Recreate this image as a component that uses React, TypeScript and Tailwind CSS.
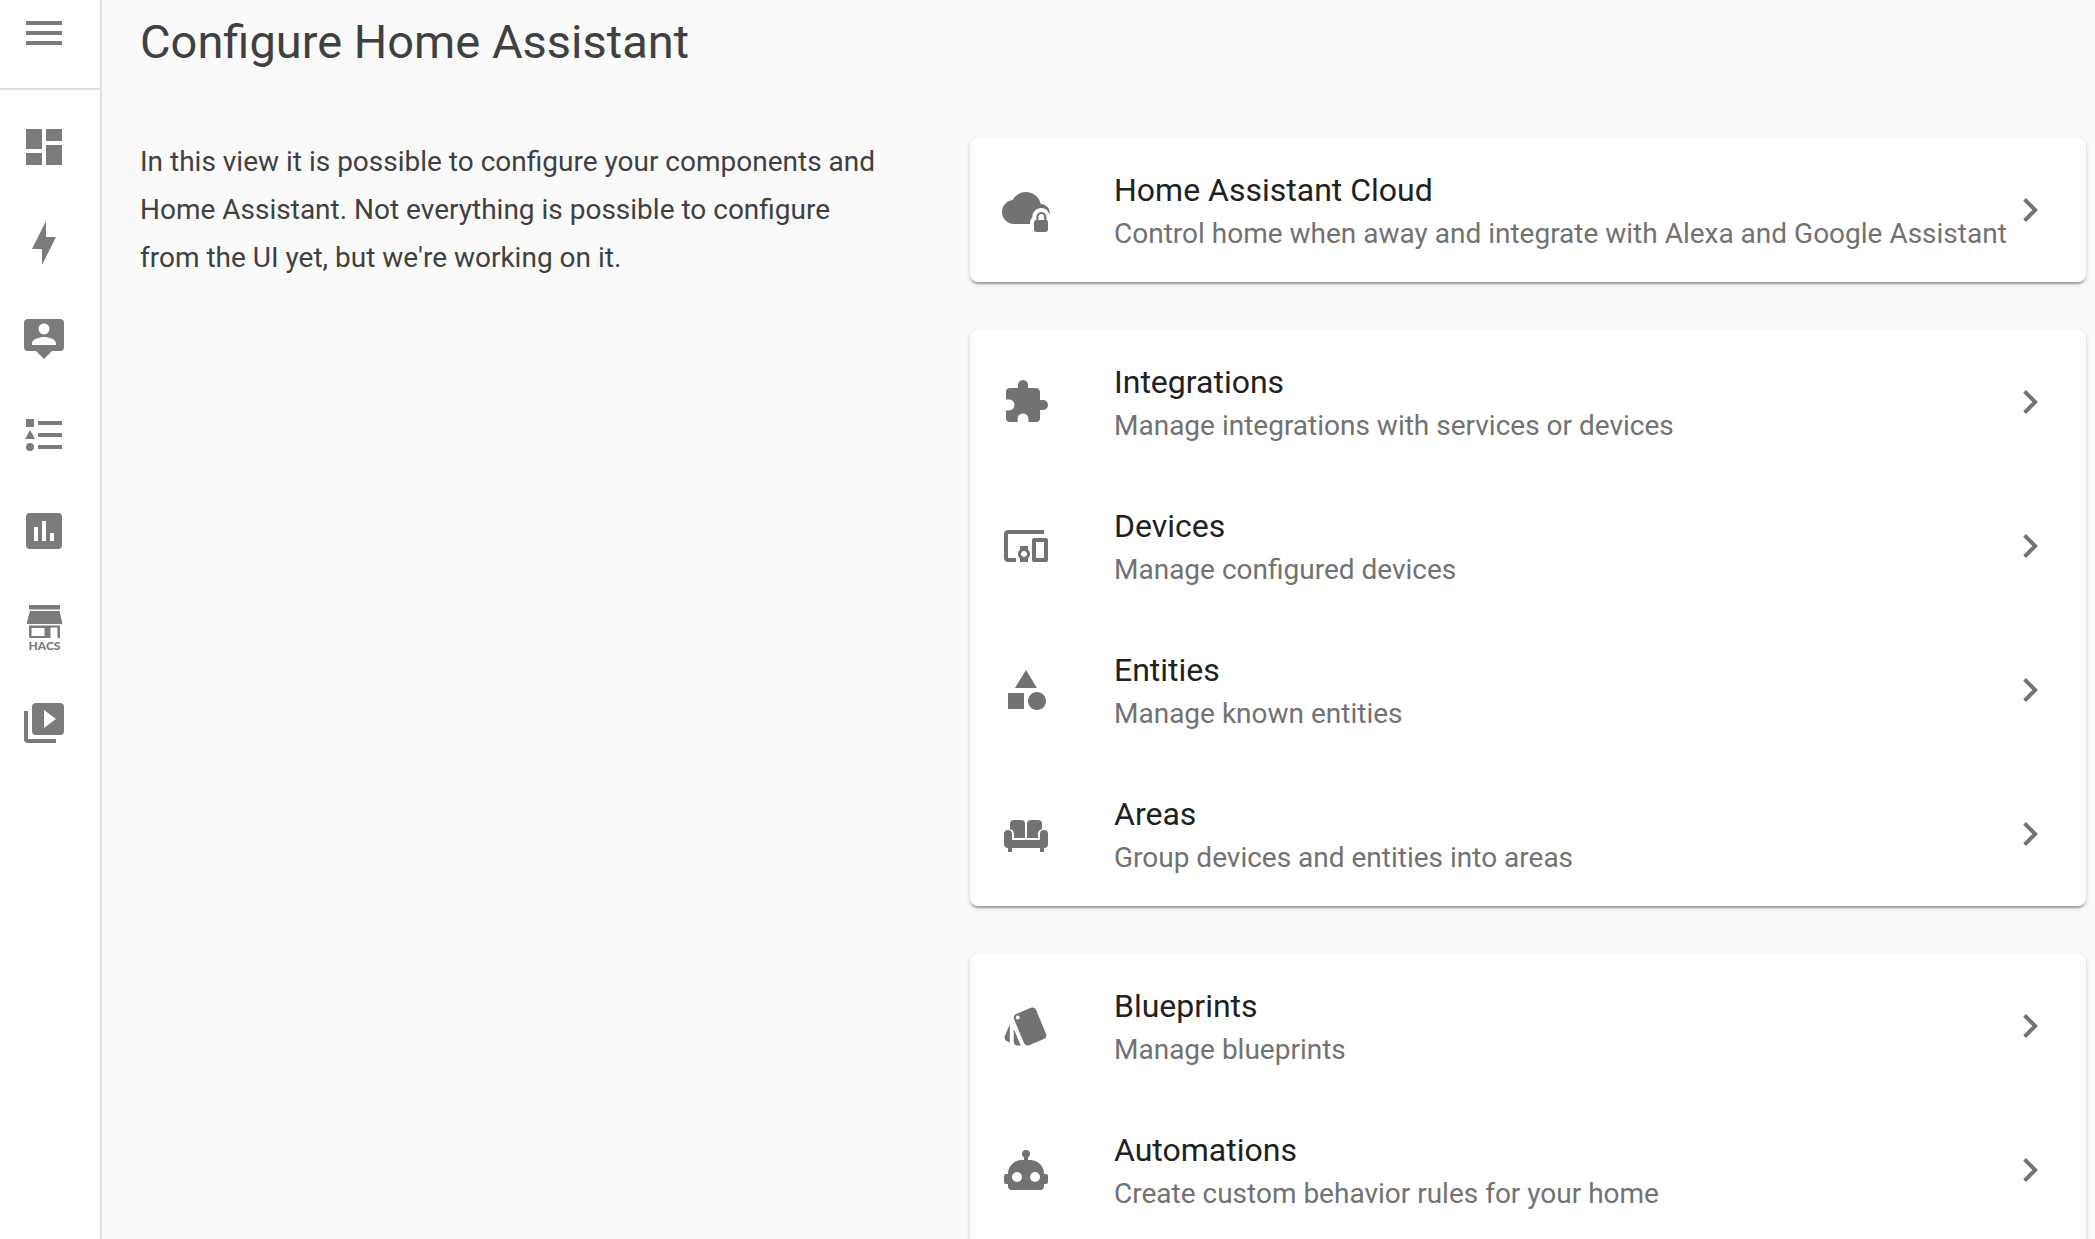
import React from "react";

const paths = {
  menu: "M3,6H21V8H3V6M3,11H21V13H3V11M3,16H21V18H3V16Z",
  dashboard: "M13,3V9H21V3M13,21H21V11H13M3,21H11V15H3M3,13H11V3H3V13Z",
  bolt: "M11 15H6L13 1V9H18L11 23V15Z",
  account:
    "M20,2H4A2,2 0 0,0 2,4V16A2,2 0 0,0 4,18H8L12,22L16,18H20A2,2 0 0,0 22,16V4A2,2 0 0,0 20,2M12,4.3C13.5,4.3 14.7,5.5 14.7,7C14.7,8.5 13.5,9.7 12,9.7C10.5,9.7 9.3,8.5 9.3,7C9.3,5.5 10.5,4.3 12,4.3M18,15H6V14.1C6,12.1 10,11 12,11C14,11 18,12.1 18,14.1V15Z",
  list: "M5,9.5L7.5,14H2.5L5,9.5M3,4H7V8H3V4M5,20A2,2 0 0,0 7,18A2,2 0 0,0 5,16A2,2 0 0,0 3,18A2,2 0 0,0 5,20M9,5V7H21V5H9M9,19H21V17H9V19M9,11V13H21V11H9Z",
  chart:
    "M9 17H7V10H9V17M13 17H11V7H13V17M17 17H15V13H17V17M19 3H5A2,2 0 0,0 3,5V19A2,2 0 0,0 5,21H19A2,2 0 0,0 21,19V5A2,2 0 0,0 19,3Z",
  media:
    "M4,6H2V20A2,2 0 0,0 4,22H18V20H4V6M20,2H8A2,2 0 0,0 6,4V16A2,2 0 0,0 8,18H20A2,2 0 0,0 22,16V4A2,2 0 0,0 20,2M12,14.5V5.5L18,10L12,14.5Z",
  cloud:
    "M12,3C9.11,3 6.6,4.64 5.35,7.04C2.34,7.36 0,9.91 0,13A6,6 0 0,0 6,19H14V18.2C14,17.2 14.5,16.2 15.2,15.7V15.5C15.2,13 17.2,11 19.6,11C21.6,11 23.2,12.3 23.8,14.3C24.4,11.6 22.2,9.2 19.35,9.04C18.67,5.59 15.64,3 12,3M22.2,17V15.5C22.2,14.1 21,13 19.7,13C18.3,13 17.2,14.1 17.2,15.5V17C16.5,17 16,17.5 16,18.2V21.8C16,22.5 16.5,23 17.2,23H21.8C22.5,23 23,22.5 23,21.8V18.2C23,17.5 22.6,17 22.2,17M21.1,17H18.2V15.5C18.2,14.6 18.9,14 19.7,14C20.5,14 21.1,14.6 21.1,15.5V17Z",
  puzzle:
    "M20.5,11H19V7C19,5.89 18.1,5 17,5H13V3.5A2.5,2.5 0 0,0 10.5,1A2.5,2.5 0 0,0 8,3.5V5H4A2,2 0 0,0 2,7V10.8H3.5C5,10.8 6.2,12 6.2,13.5C6.2,15 5,16.2 3.5,16.2H2V20A2,2 0 0,0 4,22H7.8V20.5C7.8,19 9,17.8 10.5,17.8C12,17.8 13.2,19 13.2,20.5V22H17A2,2 0 0,0 19,20V16H20.5A2.5,2.5 0 0,0 23,13.5A2.5,2.5 0 0,0 20.5,11Z",
  devices:
    "M3 6H21V4H3C1.9 4 1 4.9 1 6V18C1 19.1 1.9 20 3 20H7V18H3V6M13 12H9V13.78C8.39 14.33 8 15.11 8 16C8 16.89 8.39 17.67 9 18.22V20H13V18.22C13.61 17.67 14 16.88 14 16S13.61 14.33 13 13.78V12M11 17.5C10.17 17.5 9.5 16.83 9.5 16S10.17 14.5 11 14.5 12.5 15.17 12.5 16 11.83 17.5 11 17.5M22 8H16C15.5 8 15 8.5 15 9V19C15 19.5 15.5 20 16 20H22C22.5 20 23 19.5 23 19V9C23 8.5 22.5 8 22 8M21 18H17V10H21V18Z",
  shape:
    "M11,13.5V21.5H3V13.5H11M12,2L17.5,11H6.5L12,2M17.5,13C20,13 22,15 22,17.5C22,20 20,22 17.5,22C15,22 13,20 13,17.5C13,15 15,13 17.5,13Z",
  sofa: "M6,5H9.5A2,2 0 0,1 11.5,7V14H6V12A2.5,2.5 0 0,0 4,9.6V7A2,2 0 0,1 6,5M14.5,5H18A2,2 0 0,1 20,7V9.6A2.5,2.5 0 0,0 18,12V14H12.5V7A2,2 0 0,1 14.5,5M3,10A2,2 0 0,1 5,12V15H19V12A2,2 0 0,1 23,12V17A2,2 0 0,1 21,19V21H19V19H5V21H3V19A2,2 0 0,1 1,17V12A2,2 0 0,1 3,10Z",
  swatch:
    "M2.53,19.65L3.87,20.21V11.18L1.44,17.04C1.03,18.06 1.5,19.23 2.53,19.65M22.03,15.95L17.07,3.98C16.76,3.23 16.03,2.77 15.26,2.75C15,2.75 14.73,2.79 14.47,2.9L7.1,5.95C6.35,6.26 5.89,7 5.87,7.75C5.86,8 5.91,8.29 6,8.55L11,20.5C11.29,21.28 12.03,21.74 12.81,21.75C13.07,21.75 13.33,21.7 13.58,21.6L20.94,18.55C21.96,18.13 22.45,16.96 22.03,15.95M7.88,8.75A1,1 0 0,1 6.88,7.75A1,1 0 0,1 7.88,6.75C8.43,6.75 8.88,7.2 8.88,7.75C8.88,8.3 8.43,8.75 7.88,8.75M5.88,19.75A2,2 0 0,0 7.88,21.75H9.33L5.88,13.41V19.75Z",
  robot:
    "M12,2A2,2 0 0,1 14,4C14,4.74 13.6,5.39 13,5.73V7H14A7,7 0 0,1 21,14H22A1,1 0 0,1 23,15V18A1,1 0 0,1 22,19H21V20A2,2 0 0,1 19,22H5A2,2 0 0,1 3,20V19H2A1,1 0 0,1 1,18V15A1,1 0 0,1 2,14H3A7,7 0 0,1 10,7H11V5.73C10.4,5.39 10,4.74 10,4A2,2 0 0,1 12,2M7.5,13A2.5,2.5 0 0,0 5,15.5A2.5,2.5 0 0,0 7.5,18A2.5,2.5 0 0,0 10,15.5A2.5,2.5 0 0,0 7.5,13M16.5,13A2.5,2.5 0 0,0 14,15.5A2.5,2.5 0 0,0 16.5,18A2.5,2.5 0 0,0 19,15.5A2.5,2.5 0 0,0 16.5,13Z",
  next: "M8.59,16.58L13.17,12L8.59,7.41L10,6L16,12L10,18L8.59,16.58Z",
};

type IconName = keyof typeof paths;

function Icon({ name }: { name: IconName }) {
  return (
    <svg viewBox="0 0 24 24" className="size-12 shrink-0 fill-current" aria-hidden="true">
      <path fillRule="evenodd" d={paths[name]} />
    </svg>
  );
}

function HacsIcon() {
  return (
    <svg viewBox="0 0 48 48" className="size-12 shrink-0 overflow-visible fill-current" aria-hidden="true">
      <path
        fillRule="evenodd"
        d="M9,2H40V6.500H9ZM10,8H39.500L42,19V21H7V19ZM9,22.500H40V35H37.500V25.500Q37.500,24.500 36.500,24.500H31.500Q30.500,24.500 30.500,25.500V35H10L9,34ZM11.500,25V33H24.500V25Z"
      />
      <text x="24.500" y="47" textAnchor="middle" className="font-['Lato'] text-[12px] font-black">
        HACS
      </text>
    </svg>
  );
}

const nav: { label: string; icon: IconName | "hacs" }[] = [
  { label: "Overview", icon: "dashboard" },
  { label: "Energy", icon: "bolt" },
  { label: "Map", icon: "account" },
  { label: "Logbook", icon: "list" },
  { label: "History", icon: "chart" },
  { label: "HACS", icon: "hacs" },
  { label: "Media Browser", icon: "media" },
];

type Item = { icon: IconName; title: string; text: string };

const groups: Item[][] = [
  [
    {
      icon: "cloud",
      title: "Home Assistant Cloud",
      text: "Control home when away and integrate with Alexa and Google Assistant",
    },
  ],
  [
    { icon: "puzzle", title: "Integrations", text: "Manage integrations with services or devices" },
    { icon: "devices", title: "Devices", text: "Manage configured devices" },
    { icon: "shape", title: "Entities", text: "Manage known entities" },
    { icon: "sofa", title: "Areas", text: "Group devices and entities into areas" },
  ],
  [
    { icon: "swatch", title: "Blueprints", text: "Manage blueprints" },
    { icon: "robot", title: "Automations", text: "Create custom behavior rules for your home" },
  ],
];

function Row({ icon, title, text }: Item) {
  return (
    <a href="#" className="flex h-36 items-center px-8 text-[#727272]">
      <Icon name={icon} />
      <span className="ml-16 min-w-0 flex-1 pt-1">
        <span className="block text-[32px] leading-[44px] text-[#212121]">{title}</span>
        <span className="block text-[28px] leading-[44px] whitespace-nowrap">{text}</span>
      </span>
      <Icon name="next" />
    </a>
  );
}

export default function App() {
  return (
    <div className="flex h-screen overflow-hidden bg-[#fafafa] font-['Roboto',sans-serif]">
      <aside className="flex w-[102px] shrink-0 flex-col border-r-2 border-[#e0e0e0] bg-white text-[#7b7b7b]">
        <div className="flex h-[90px] shrink-0 border-b-2 border-[#e0e0e0] px-5 pt-[9px]">
          <button type="button" aria-label="Toggle sidebar" className="h-12">
            <Icon name="menu" />
          </button>
        </div>
        <nav className="flex flex-col gap-12 px-5 pt-[33px]">
          {nav.map(({ label, icon }) => (
            <a key={label} href="#" aria-label={label}>
              {icon === "hacs" ? <HacsIcon /> : <Icon name={icon} />}
            </a>
          ))}
        </nav>
      </aside>
      <main className="min-w-0 flex-1 pr-[9px] pl-[38px]">
        <h1 className="pt-2 text-[47px] leading-[68px] text-[#404040]">Configure Home Assistant</h1>
        <div className="mt-[62px] grid grid-cols-[2fr_3fr] gap-[86px]">
          <p className="text-[28px] leading-[48px] text-[#404040]">
            In this view it is possible to configure your components and Home Assistant. Not
            everything is possible to configure from the UI yet, but we're working on it.
          </p>
          <div className="flex min-w-0 flex-col gap-12">
            {groups.map((items) => (
              <section
                key={items[0].title}
                className="rounded-lg bg-white shadow-[0_4px_2px_-2px_rgba(0,0,0,0.2),0_2px_2px_0_rgba(0,0,0,0.14),0_2px_6px_0_rgba(0,0,0,0.12)] last:pb-6"
              >
                {items.map((item) => (
                  <Row key={item.title} {...item} />
                ))}
              </section>
            ))}
          </div>
        </div>
      </main>
    </div>
  );
}
